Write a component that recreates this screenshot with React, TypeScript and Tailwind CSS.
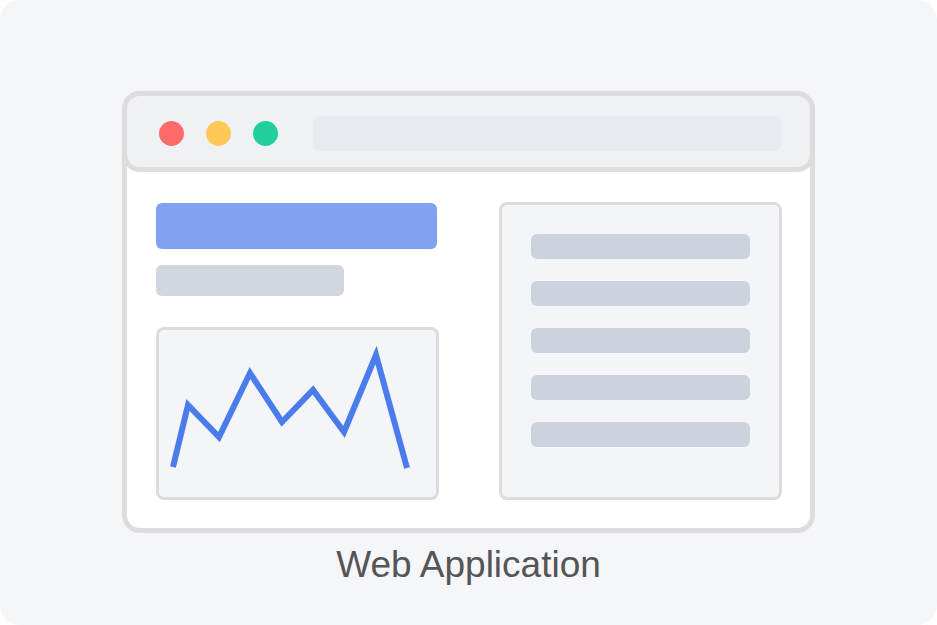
export default function App() {
    const points = "14,137 29,75 60,107 91,43 123,92 154,60 185,102 217,25 248,138";

    return (
        <div className="w-[937px] h-[625px] bg-white" style={{ fontFamily: '"Liberation Sans", Arial, sans-serif' }}>
            <div className="h-full rounded-[20px] bg-[#f4f6fa] flex flex-col items-center pt-[91px]">
                {/* Browser window */}
                <div className="w-[693px] h-[442px] border-[5px] border-[#dddddd] rounded-[18px] bg-white flex flex-col">
                    {/* Title bar */}
                    <div className="-mx-[5px] -mt-[5px] h-[81px] shrink-0 border-[5px] border-[#dddddd] rounded-[18px] bg-[#f0f1f5] flex items-center pt-[3px] pl-[32px] pr-[29px]">
                        <div className="flex items-center gap-[22px]">
                            <div className="h-[25px] w-[25px] rounded-full bg-[#ff6b6b]" />
                            <div className="h-[25px] w-[25px] rounded-full bg-[#ffc857]" />
                            <div className="h-[25px] w-[25px] rounded-full bg-[#20cf9b]" />
                        </div>
                        <div className="ml-[35px] flex-1 h-[35px] rounded-[6px] bg-[#e7eaee]" />
                    </div>

                    {/* Body */}
                    <div className="flex justify-between pl-[29px] pr-[28px] pt-[30px]">
                        <div className="w-[283px] pt-[1px]">
                            <div className="w-[281px] h-[46px] rounded-[6px] bg-[#81a1f1]" />
                            <div className="mt-[16px] w-[188px] h-[31px] rounded-[6px] bg-[#d1d7df]" />
                            <div className="mt-[31px] w-[283px] h-[173px] border-[3px] border-[#dcdcdc] rounded-[8px] bg-[#f4f5f9]">
                                <svg width="277" height="167" viewBox="0 0 277 167" fill="none">
                                    <polyline points={points} stroke="#4a7cec" strokeWidth="6" strokeLinejoin="miter" />
                                </svg>
                            </div>
                        </div>

                        <div className="w-[283px] h-[298px] border-[3px] border-[#dcdcdc] rounded-[8px] bg-[#f4f5f9] pl-[29px] pt-[29px] flex flex-col gap-[22px]">
                            <div className="w-[219px] h-[25px] rounded-[6px] bg-[#cdd3de]" />
                            <div className="w-[219px] h-[25px] rounded-[6px] bg-[#cdd3de]" />
                            <div className="w-[219px] h-[25px] rounded-[6px] bg-[#cdd3de]" />
                            <div className="w-[219px] h-[25px] rounded-[6px] bg-[#cdd3de]" />
                            <div className="w-[219px] h-[25px] rounded-[6px] bg-[#cdd3de]" />
                        </div>
                    </div>
                </div>

                <div className="mt-[13px] text-[37px] leading-[37px] text-[#555555]">Web Application</div>
            </div>
        </div>
    );
}
